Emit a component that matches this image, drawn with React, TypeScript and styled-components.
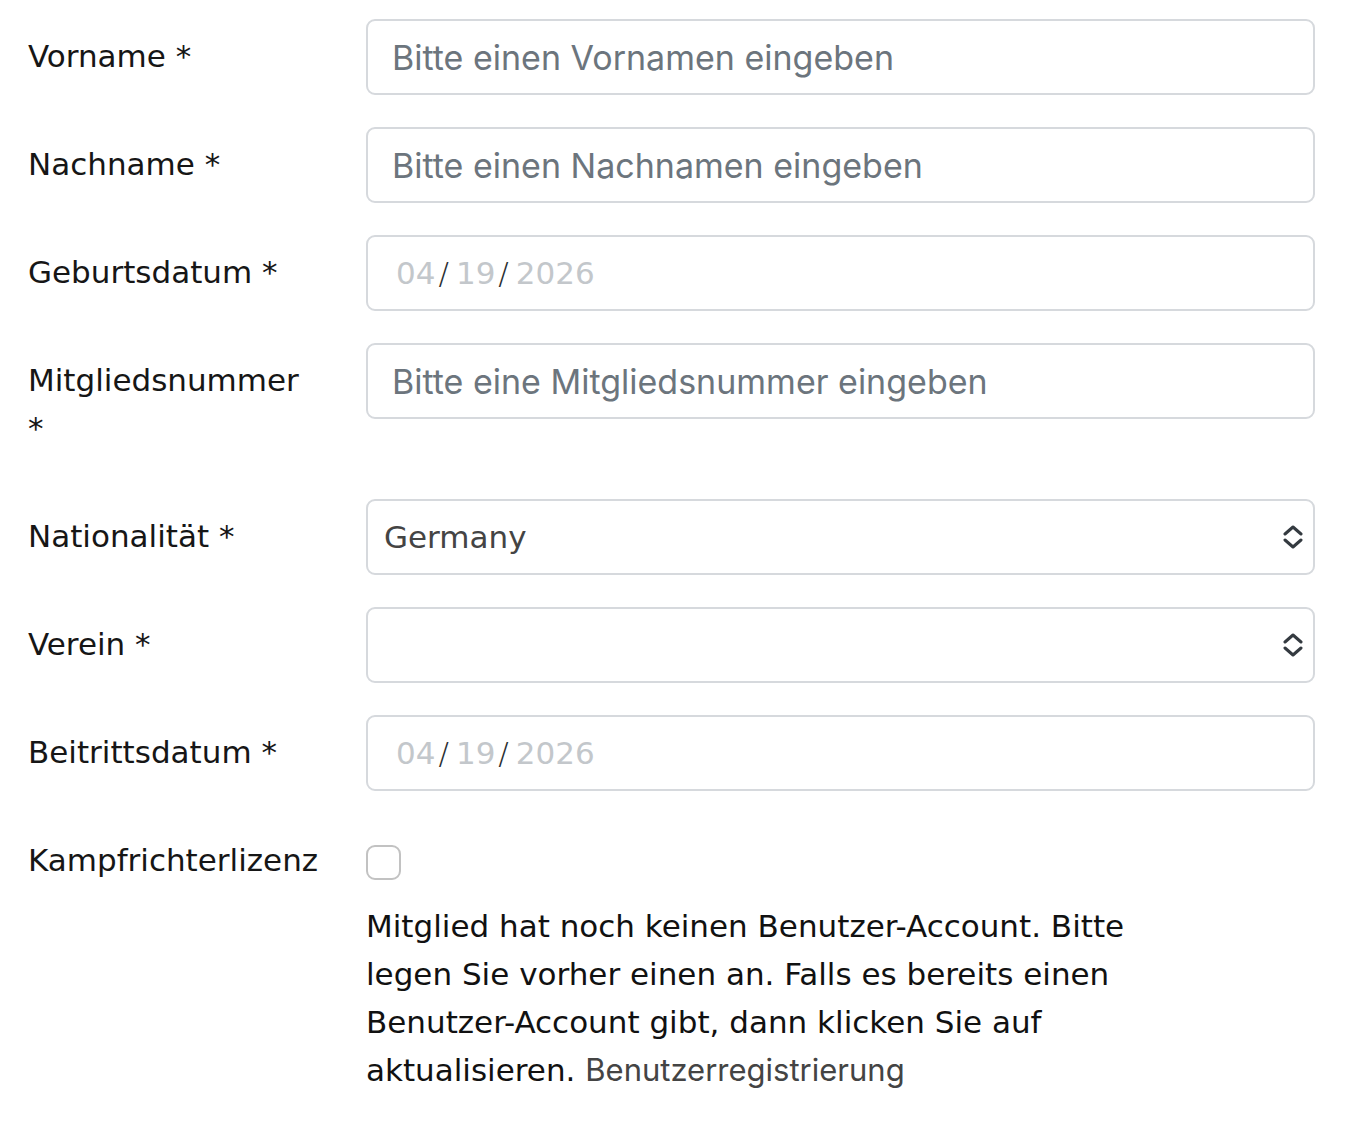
import React from 'react'
import styled, { createGlobalStyle } from 'styled-components'

const GlobalStyle = createGlobalStyle`
  body {
    margin: 0;
    background: #fff;
    font-family: 'DejaVu Sans', sans-serif;
  }
`

const Form = styled.form`
  padding: 19px 53px 0 28px;
`

const Row = styled.div`
  display: grid;
  grid-template-columns: 338px 1fr;
  margin-bottom: 32px;
`

const Label = styled.label`
  padding: 13px 50px 15px 0;
  font-family: 'DejaVu Sans', sans-serif;
  font-size: 31px;
  line-height: 48px;
  color: #161616;
`

const Input = styled.input`
  box-sizing: border-box;
  width: 100%;
  height: 76px;
  padding: 0 24px;
  border: 2px solid #d6d9dd;
  border-radius: 9px;
  font-family: 'Inter', sans-serif;
  font-size: 34px;
  color: #212529;
  outline: none;

  &::placeholder {
    color: #6c757d;
  }
`

const Field = styled.div`
  box-sizing: border-box;
  display: flex;
  align-items: center;
  height: 76px;
  padding: 0 10px 0 28px;
  border: 2px solid #d6d9dd;
  border-radius: 9px;
`

const DatePart = styled.span<{ $sep?: boolean }>`
  font-family: 'DejaVu Sans', sans-serif;
  font-size: 31px;
  font-weight: ${(p) => (p.$sep ? 300 : 400)};
  color: ${(p) => (p.$sep ? '#2b2f33' : '#c3c7cb')};
  margin: ${(p) => (p.$sep ? '0 7px 0 3px' : '0')};
`

const SelectBox = styled(Field)`
  padding-left: 16px;
  justify-content: space-between;
`

const SelectValue = styled.span`
  font-family: 'DejaVu Sans', sans-serif;
  font-size: 31px;
  color: #444;
`

const Checkbox = styled.span`
  display: block;
  width: 31px;
  height: 31px;
  margin-top: 22px;
  border: 2px solid #c2c2c2;
  border-radius: 9px;
`

const Help = styled.p`
  max-width: 800px;
  margin: 22px 0 0;
  font-family: 'DejaVu Sans', sans-serif;
  font-size: 31px;
  line-height: 48px;
  color: #111;
`

const HelpLink = styled.a`
  font-family: 'Inter', sans-serif;
  font-size: 31px;
  color: #444;
  text-decoration: none;
`

const Chevrons = () => (
  <svg width="20" height="24" viewBox="0 0 20 24" fill="none" stroke="#343a40" strokeWidth="3" strokeLinecap="round" strokeLinejoin="round">
    <polyline points="2,9 10,2 18,9" />
    <polyline points="2,15 10,22 18,15" />
  </svg>
)

const DateField = () => (
  <Field>
    <DatePart>04</DatePart>
    <DatePart $sep>/</DatePart>
    <DatePart>19</DatePart>
    <DatePart $sep>/</DatePart>
    <DatePart>2026</DatePart>
  </Field>
)

const Select = ({ value }: { value?: string }) => (
  <SelectBox>
    <SelectValue>{value}</SelectValue>
    <Chevrons />
  </SelectBox>
)

export default function App() {
  return (
    <>
      <GlobalStyle />
      <Form>
        <Row>
          <Label>Vorname *</Label>
          <Input placeholder="Bitte einen Vornamen eingeben" />
        </Row>
        <Row>
          <Label>Nachname *</Label>
          <Input placeholder="Bitte einen Nachnamen eingeben" />
        </Row>
        <Row>
          <Label>Geburtsdatum *</Label>
          <DateField />
        </Row>
        <Row>
          <Label>Mitgliedsnummer *</Label>
          <Input placeholder="Bitte eine Mitgliedsnummer eingeben" />
        </Row>
        <Row>
          <Label>Nationalität *</Label>
          <Select value="Germany" />
        </Row>
        <Row>
          <Label>Verein *</Label>
          <Select />
        </Row>
        <Row>
          <Label>Beitrittsdatum *</Label>
          <DateField />
        </Row>
        <Row>
          <Label>Kampfrichterlizenz</Label>
          <div>
            <Checkbox />
            <Help>
              Mitglied hat noch keinen Benutzer-Account. Bitte legen Sie vorher einen an. Falls es
              bereits einen Benutzer-Account gibt, dann klicken Sie auf aktualisieren.{' '}
              <HelpLink href="#">Benutzerregistrierung</HelpLink>
            </Help>
          </div>
        </Row>
      </Form>
    </>
  )
}
